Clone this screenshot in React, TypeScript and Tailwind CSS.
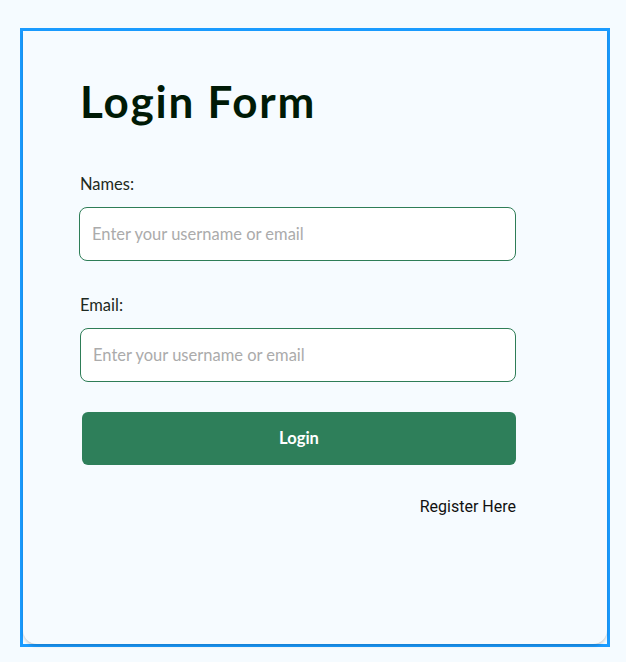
import React, { useState } from "react";

export default function App() {
  const [name, setName] = useState("");
  const [email, setEmail] = useState("");

  return (
    <div className="min-h-screen w-full bg-[#f5fbff] pt-[28px] pl-[20px] font-['Lato',sans-serif]">
      {/* Outlined card */}
      <div className="w-[590px] h-[619px] border-[3px] border-[#1a9bff] bg-[#f5fbff]">
        <div className="h-full rounded-b-[14px] bg-[#f6fbff] shadow-[0_2px_3px_rgba(0,0,0,0.18)] pl-[57px] pt-[42px]">
          <h1 className="text-[44px] leading-[56px] font-bold text-[#001a06] tracking-[1.8px]">
            Login Form
          </h1>

          <form className="mt-[45px] w-[436px]" onSubmit={e => e.preventDefault()}>
            {/* Names */}
            <label className="block text-[16.5px] leading-[20px] text-[#1e2a22]">Names:</label>
            <input
              type="text"
              value={name}
              onChange={e => setName(e.target.value)}
              placeholder="Enter your username or email"
              className="mt-[13px] -ml-px block w-[437px] h-[54px] rounded-[8px] border border-[#2e7d57] bg-white px-[12px] text-[16.5px] text-[#222] placeholder:text-[#ababab] outline-none"
            />

            {/* Email */}
            <label className="mt-[34px] block text-[16.5px] leading-[20px] text-[#1e2a22]">Email:</label>
            <input
              type="email"
              value={email}
              onChange={e => setEmail(e.target.value)}
              placeholder="Enter your username or email"
              className="mt-[13px] block w-[436px] h-[54px] rounded-[8px] border border-[#2e7d57] bg-white px-[12px] text-[16.5px] text-[#222] placeholder:text-[#ababab] outline-none"
            />

            <button
              type="submit"
              className="mt-[30px] ml-[2px] block w-[434px] h-[53px] rounded-[6px] bg-[#2e7f5a] text-white text-[16.5px] font-bold"
            >
              Login
            </button>

            <div className="mt-[29px] text-right">
              <a href="#" className="text-[16px] leading-[20px] text-[#111] font-['Roboto',sans-serif]">
                Register Here
              </a>
            </div>
          </form>
        </div>
      </div>
    </div>
  );
}
